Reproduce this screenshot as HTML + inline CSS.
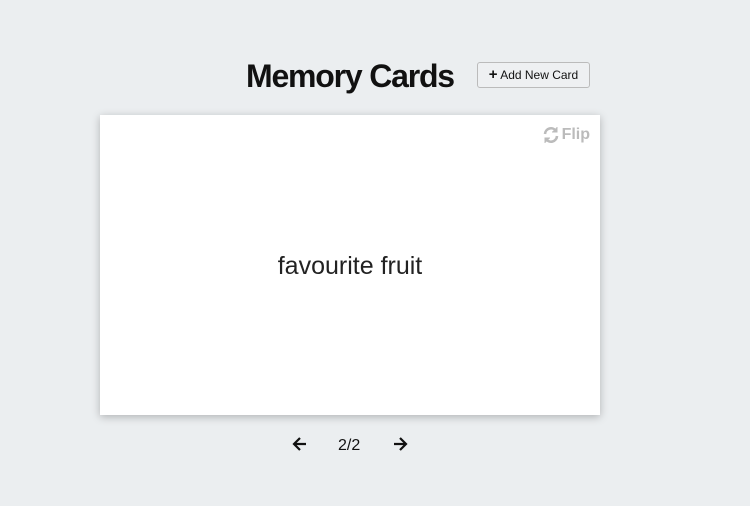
<!DOCTYPE html><html><head><style>
body{margin:0;width:750px;height:506px;background:#ebeef0;font-family:"Liberation Sans",sans-serif;position:relative;overflow:hidden}
h1{position:absolute;left:246px;top:56px;margin:0;font-size:32px;font-weight:bold;color:#111;letter-spacing:-1.2px;line-height:40px}
.btn{position:absolute;left:477px;top:62px;border:1px solid #bbb;border-radius:3px;background:#eef0f2;font-size:12px;line-height:24px;text-align:center;color:#111;box-sizing:border-box;width:113px;height:26px}
.card{position:absolute;left:100px;top:115px;width:500px;height:300px;background:#fff;box-shadow:0 2px 8px rgba(0,0,0,.25)}
.flip{position:absolute;right:10px;top:11px;color:#bbb;font-weight:bold;font-size:16px;display:flex;align-items:center;gap:2px}
.txt{position:absolute;left:0;right:0;top:137px;text-align:center;font-size:25px;color:#222}
.nav{position:absolute;top:437px;font-size:16px;color:#111}
</style></head><body>
<h1>Memory Cards</h1>
<div class="btn"><b style="font-size:15px">+</b> Add New Card</div>
<div class="card"><div class="flip"><svg width="18" height="18" viewBox="0 0 18 18" fill="none" stroke="#bbb" stroke-width="2.6"><path d="M3 8a6 6 0 0 1 11-3"/><path d="M15 10a6 6 0 0 1-11 3"/><path d="M15 1v5h-5" fill="#bbb" stroke-width="1"/><path d="M3 17v-5h5" fill="#bbb" stroke-width="1"/></svg>Flip</div>
<div class="txt">favourite fruit</div></div>
<svg style="position:absolute;left:292px;top:436px" width="16" height="16" viewBox="0 0 16 16" fill="none" stroke="#111" stroke-width="2.2"><path d="M14 8H2M8 2L2 8l6 6"/></svg>
<div class="nav" style="left:338px">2/2</div>
<svg style="position:absolute;left:392px;top:436px" width="16" height="16" viewBox="0 0 16 16" fill="none" stroke="#111" stroke-width="2.2"><path d="M2 8h12M8 2l6 6-6 6"/></svg>
</body></html>
